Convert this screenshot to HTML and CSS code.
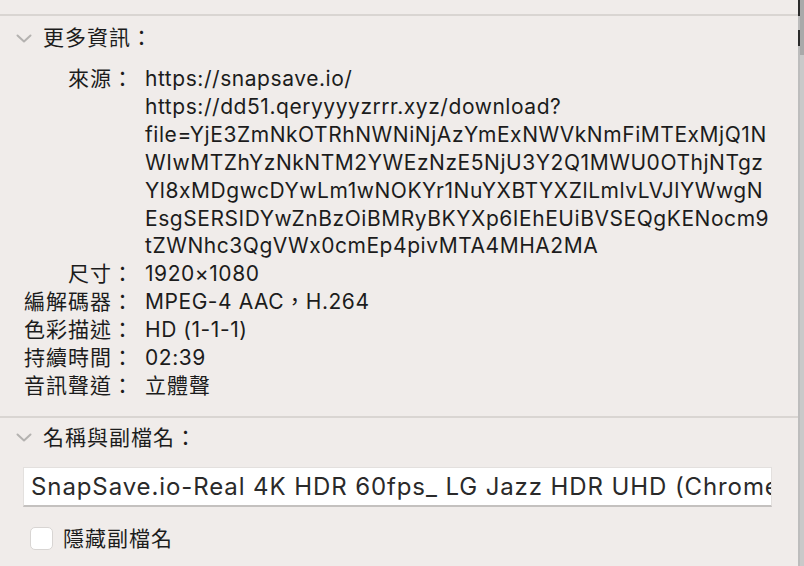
FILE: index.html
```html
<!DOCTYPE html>
<html lang="zh-Hant">
<head>
<meta charset="utf-8">
<title>更多資訊</title>
<link rel="stylesheet" href="styles.css">
</head>
<body>
<div class="window">
  <div class="panel">
    <div class="top-space"></div>
    <section class="section">
      <div class="section-head">
        <svg class="chev" width="16" height="9" viewBox="0 0 16 9"><polyline points="1.5,1.5 8,7.5 14.5,1.5" fill="none" stroke="#b4b2b0" stroke-width="2" stroke-linecap="round" stroke-linejoin="round"/></svg>
        <span class="head-text">更多資訊：</span>
      </div>
      <dl class="info">
        <dt>來源：</dt>
        <dd>
          <span class="ln">https://snapsave.io/</span>
          <span class="ln">https://dd51.qeryyyyzrrr.xyz/download?</span>
          <span class="ln">file=YjE3ZmNkOTRhNWNiNjAzYmExNWVkNmFiMTExMjQ1N</span>
          <span class="ln">WIwMTZhYzNkNTM2YWEzNzE5NjU3Y2Q1MWU0OThjNTgz</span>
          <span class="ln">Yl8xMDgwcDYwLm1wNOKYr1NuYXBTYXZlLmlvLVJlYWwgN</span>
          <span class="ln">EsgSERSIDYwZnBzOiBMRyBKYXp6IEhEUiBVSEQgKENocm9</span>
          <span class="ln">tZWNhc3QgVWx0cmEp4pivMTA4MHA2MA</span>
        </dd>
        <dt>尺寸：</dt><dd>1920×1080</dd>
        <dt>編解碼器：</dt><dd>MPEG-4 AAC，H.264</dd>
        <dt>色彩描述：</dt><dd>HD (1-1-1)</dd>
        <dt>持續時間：</dt><dd>02:39</dd>
        <dt>音訊聲道：</dt><dd class="cjk">立體聲</dd>
      </dl>
    </section>
    <section class="section second">
      <div class="section-head">
        <svg class="chev" width="16" height="9" viewBox="0 0 16 9"><polyline points="1.5,1.5 8,7.5 14.5,1.5" fill="none" stroke="#b4b2b0" stroke-width="2" stroke-linecap="round" stroke-linejoin="round"/></svg>
        <span class="head-text">名稱與副檔名：</span>
      </div>
      <div class="name-field"><span class="name-text">SnapSave.io-Real 4K HDR 60fps_ LG Jazz HDR UHD (Chromecast Ultra).mp4</span></div>
      <label class="check-row"><span class="checkbox"></span><span class="check-label">隱藏副檔名</span></label>
    </section>
  </div>
  <div class="strip">
    <div class="s-dark s1"></div>
    <div class="s-mid s2"></div>
    <div class="s-dark s3"></div>
    <div class="s-mid s4"></div>
    <div class="s-light"></div>
  </div>
</div>
</body>
</html>
```
FILE: styles.css
```css
* { box-sizing: border-box; }
html, body { margin: 0; padding: 0; }
body {
  width: 804px;
  height: 566px;
  overflow: hidden;
  font-family: Inter, "Noto Sans CJK TC", sans-serif;
  font-size: 21px;
  letter-spacing: 0.55px;
  color: #1c1c1c;
  background: #f0ecea;
}
.window {
  display: flex;
  height: 566px;
}
.panel {
  flex: 1;
  background: #f0ecea;
  overflow: hidden;
}
.top-space {
  height: 16px;
  border-bottom: 2px solid #d9d5d2;
}
.section-head {
  display: flex;
  align-items: center;
  height: 28px;
  margin-top: 8px;
}
.chev {
  margin-left: 16px;
  margin-right: 11px;
}
.head-text {
  letter-spacing: 1px;
  line-height: 28px;
}
.info {
  display: grid;
  grid-template-columns: 134px 1fr;
  column-gap: 11px;
  margin: 13px 0 0 0;
  line-height: 27.9px;
}
.info dt {
  text-align: right;
  white-space: nowrap;
  letter-spacing: 1px;
}
.info dd {
  margin: 0;
  white-space: nowrap;
}
.info .cjk { letter-spacing: 1px; }
.ln { display: block; }
.second {
  margin-top: 16px;
  border-top: 2px solid #d9d5d2;
}
.second .section-head {
  margin-top: 6px;
}
.name-field {
  margin: 15px 26px 0 23px;
  height: 40px;
  background: #ffffff;
  border: 1px solid #e3e0de;
  border-bottom: 2px solid #c4c1bf;
  padding: 0 0 0 7px;
  display: flex;
  align-items: center;
  overflow: hidden;
  white-space: nowrap;
  color: #2a2a2a;
  font-size: 24px;
  letter-spacing: 0.9px;
}
.check-row {
  display: flex;
  align-items: center;
  margin: 20px 0 0 30px;
}
.checkbox {
  width: 23px;
  height: 23px;
  border-radius: 5px;
  background: #ffffff;
  border: 1px solid #d8d5d3;
  margin-right: 10px;
}
.check-label {
  line-height: 23px;
  letter-spacing: 1px;
}
.strip {
  width: 6px;
  display: flex;
  flex-direction: column;
  background: #c9c9c9;
}
.s-dark {
  border-left: 2px solid #2b2b2b;
  background: #a9a9a9;
}
.s-mid {
  border-left: 2px solid #bcbcbc;
  background: #a9a9a9;
}
.s1 { height: 16px; }
.s2 { height: 14px; }
.s3 { height: 16px; }
.s4 { height: 9px; }
.s-light {
  flex: 1;
  border-left: 2px solid #bdbdbd;
  background: #c9c9c9;
}
```
